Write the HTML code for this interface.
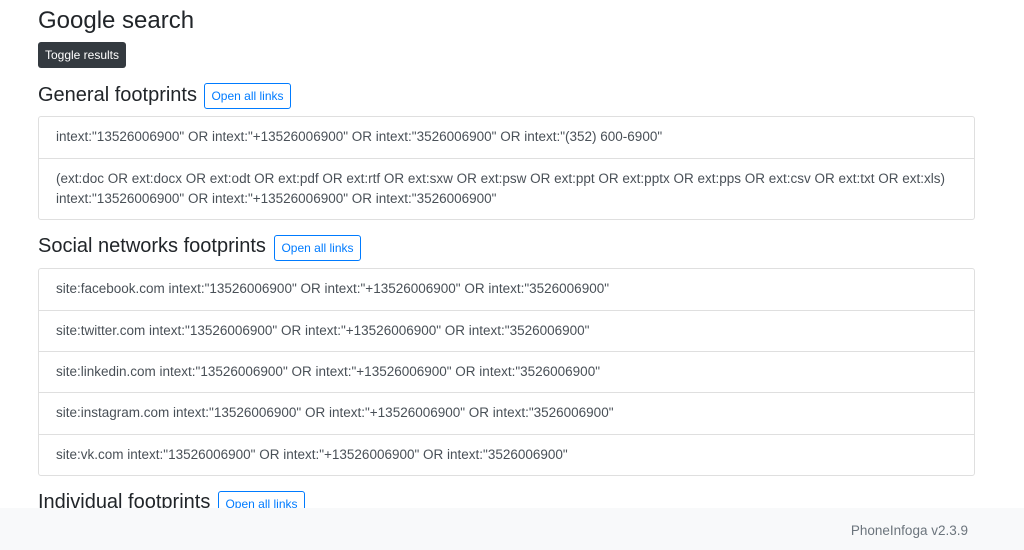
<!DOCTYPE html>
<html><head><style>
body{margin:0;width:1024px;height:550px;overflow:hidden;font-family:"Liberation Sans",sans-serif;color:#212529;background:#fff;position:relative}
.a{position:absolute}
h2{margin:0;font-weight:400;font-size:24px;position:absolute;left:38px;top:6px;line-height:29px}
h4{margin:0;font-weight:400;font-size:20px;position:absolute;left:38px;line-height:24px}
.tg{left:38px;top:42px;width:88px;height:26px;background:#343a40;border-radius:3px;color:#fff;font-size:12px;line-height:27px;text-align:center}
.ob{height:24px;border:1px solid #007bff;border-radius:3px;color:#007bff;font-size:12px;line-height:25px;text-align:center;width:85px;background:#fff}
.list{left:38px;width:935px;border:1px solid #dfdfdf;border-radius:3px;background:#fff}
.it{border-top:1px solid #dfdfdf;padding:0 17px;font-size:13.5px;color:#495057;line-height:20px;display:flex;align-items:center;padding-bottom:1px;box-sizing:border-box}
.it:first-child{border-top:0}
.ft{left:0;top:508px;width:1024px;height:42px;background:#f8f9fa}
.ft span{position:absolute;right:56px;top:15px;font-size:13.5px;color:#6c757d}
</style></head><body>
<h2>Google search</h2>
<div class="a tg">Toggle results</div>
<h4 style="top:83px">General footprints</h4>
<div class="a ob" style="left:204px;top:83px">Open all links</div>
<div class="a list" style="top:116px">
<div class="it" style="height:41px">intext:"13526006900" OR intext:"+13526006900" OR intext:"3526006900" OR intext:"(352) 600-6900"</div>
<div class="it" style="height:61px">(ext:doc OR ext:docx OR ext:odt OR ext:pdf OR ext:rtf OR ext:sxw OR ext:psw OR ext:ppt OR ext:pptx OR ext:pps OR ext:csv OR ext:txt OR ext:xls)<br>intext:"13526006900" OR intext:"+13526006900" OR intext:"3526006900"</div>
</div>
<h4 style="top:234px">Social networks footprints</h4>
<div class="a ob" style="left:274px;top:235px">Open all links</div>
<div class="a list" style="top:268px">
<div class="it" style="height:41px">site:facebook.com intext:"13526006900" OR intext:"+13526006900" OR intext:"3526006900"</div>
<div class="it" style="height:41px">site:twitter.com intext:"13526006900" OR intext:"+13526006900" OR intext:"3526006900"</div>
<div class="it" style="height:41px">site:linkedin.com intext:"13526006900" OR intext:"+13526006900" OR intext:"3526006900"</div>
<div class="it" style="height:42px">site:instagram.com intext:"13526006900" OR intext:"+13526006900" OR intext:"3526006900"</div>
<div class="it" style="height:41px">site:vk.com intext:"13526006900" OR intext:"+13526006900" OR intext:"3526006900"</div>
</div>
<h4 style="top:490px">Individual footprints</h4>
<div class="a ob" style="left:218px;top:491px">Open all links</div>
<div class="a ft"><span>PhoneInfoga v2.3.9</span></div>
</body></html>
